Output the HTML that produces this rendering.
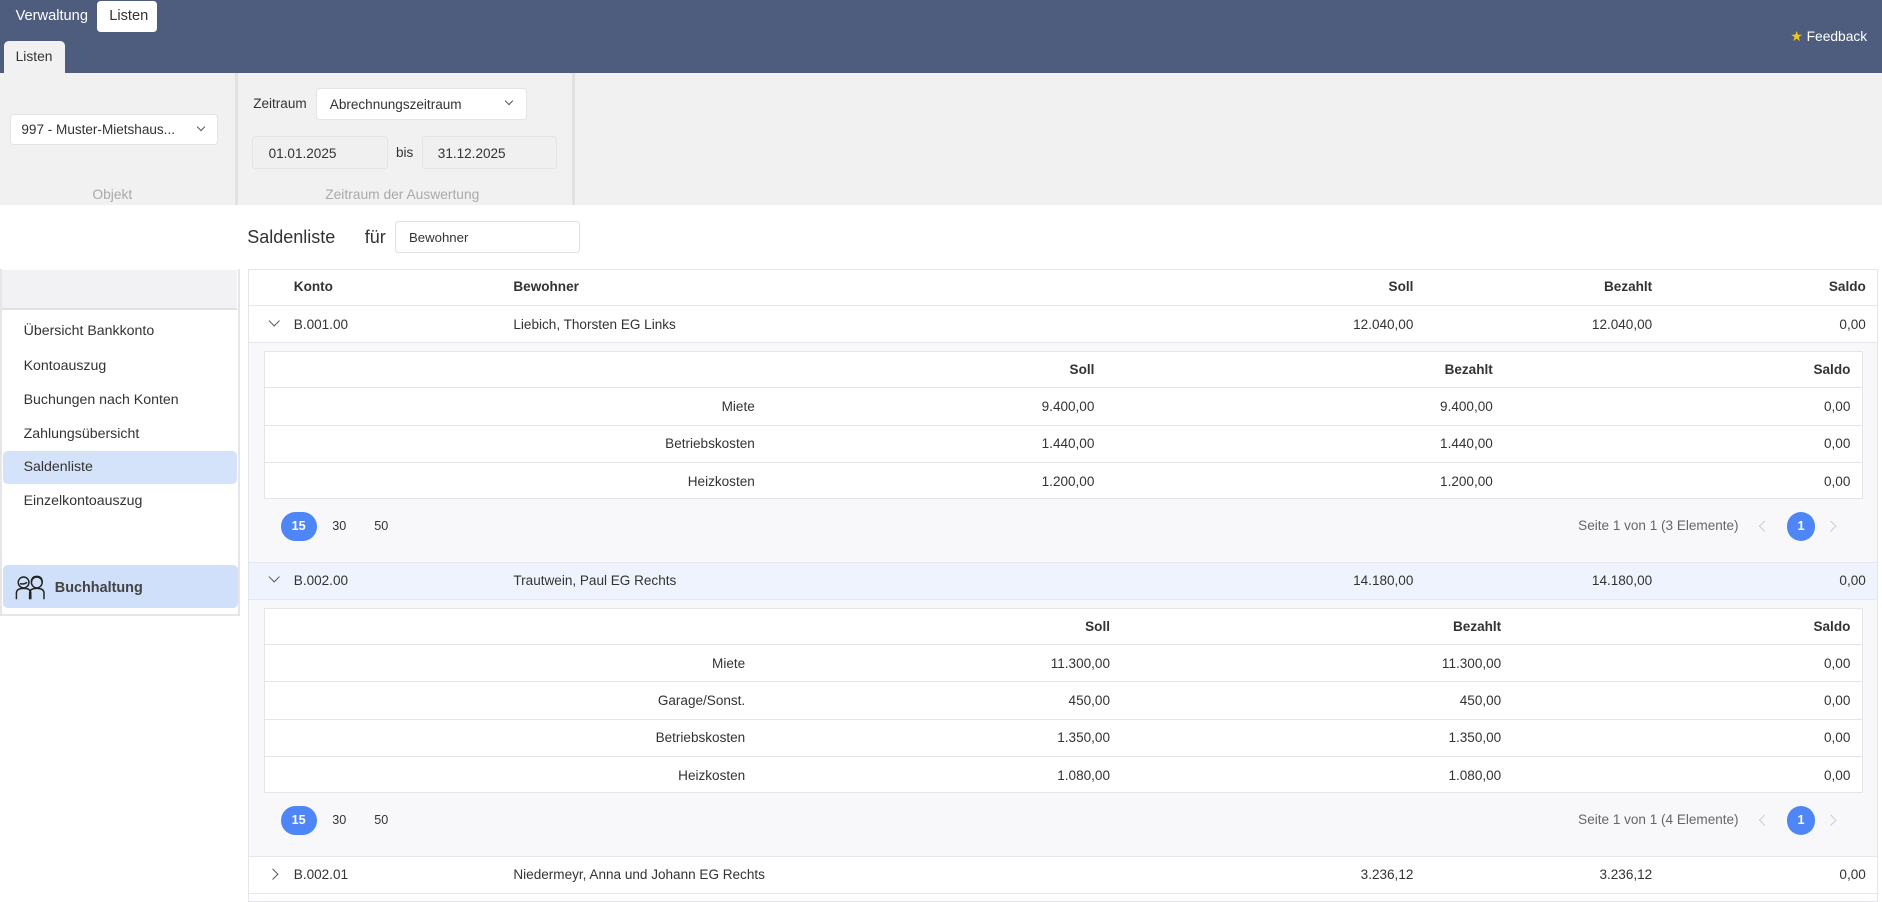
<!DOCTYPE html>
<html><head><meta charset="utf-8">
<style>
*{box-sizing:border-box;margin:0;padding:0}
html,body{width:1882px;height:902px;overflow:hidden;background:#fff}
#r{zoom:1.2;position:relative;width:1568px;height:752px;font-family:"Liberation Sans",sans-serif;font-size:11.3px;color:#333}
.a{position:absolute}
.top{left:0;top:0;width:1568px;height:61px;background:#4e5d7e}
.w{color:#fff}
.sel{background:#fff;border:1px solid #e3e3e3;border-radius:3px}
.inp{background:#f0f0f0;border:1px solid #e4e4e4;border-radius:3px}
.lbl{color:#aaa;font-size:11.5px}
.nav{left:0;top:224px;width:200px;height:289px;border:2px solid #e6e6ea;border-top:none;background:#fff}
.tb{left:207px;top:224px;width:1358px;height:528px;border:1px solid #e4e4ea;background:#fff}
.row{position:absolute;left:0;width:1356px;border-bottom:1px solid #e6e6ee}
.b{font-weight:bold}
.r{text-align:right}
.chev{position:absolute;width:7px;height:7px;border-right:1px solid #555;border-bottom:1px solid #555}
.pg{position:absolute;width:30px;height:24px;border-radius:12px;background:#4e86f7;color:#fff;font-weight:bold;font-size:10.5px;text-align:center;line-height:24px}
.inner{position:absolute;border:1px solid #e4e4ea;background:#fff}
.ir{position:absolute;left:0;right:0;height:31px;border-bottom:1px solid #e4e4ea}
</style></head><body><div id="r">
<div class="a top"></div>
<div class="a w" style="left:13px;top:7px;font-size:12.2px">Verwaltung</div>
<div class="a" style="left:81px;top:1px;width:50px;height:26px;background:#fff;border-radius:3px;font-size:12.2px;padding:6px 0 0 10px">Listen</div>
<div class="a" style="left:3px;top:34px;width:51px;height:27px;background:#f1f1f1;border-radius:4px 4px 0 0;font-size:11.5px;padding:7px 0 0 10px">Listen</div>
<div class="a w" style="left:1492px;top:24px;font-size:11.5px"><span style="color:#f5c518">★</span> Feedback</div>

<div class="a" style="left:0;top:61px;width:1568px;height:110px;background:#f1f1f1"></div>
<div class="a" style="left:196px;top:61px;width:2px;height:110px;background:#e2e2e2"></div>
<div class="a" style="left:477px;top:61px;width:2px;height:110px;background:#e2e2e2"></div>
<div class="a sel" style="left:8px;top:95px;width:174px;height:26px;padding:6px 0 0 9px">997 - Muster-Mietshaus...</div>
<div class="chev" style="left:165px;top:103px;transform:rotate(45deg);width:5px;height:5px"></div>
<div class="a lbl" style="left:77px;top:156px">Objekt</div>
<div class="a" style="left:211px;top:80px">Zeitraum</div>
<div class="a sel" style="left:263px;top:73px;width:176px;height:27px;padding:7px 0 0 11px">Abrechnungszeitraum</div>
<div class="chev" style="left:422px;top:82px;transform:rotate(45deg);width:5px;height:5px"></div>
<div class="a inp" style="left:210px;top:113px;width:113px;height:28px;padding:8px 0 0 13px">01.01.2025</div>
<div class="a" style="left:330px;top:121px">bis</div>
<div class="a inp" style="left:352px;top:113px;width:112px;height:28px;padding:8px 0 0 12px">31.12.2025</div>
<div class="a lbl" style="left:271px;top:156px">Zeitraum der Auswertung</div>

<div class="a" style="left:206px;top:189px;font-size:15px">Saldenliste</div>
<div class="a" style="left:304px;top:189px;font-size:15px">für</div>
<div class="a sel" style="left:329px;top:184px;width:154px;height:27px;padding:7px 0 0 11px;font-size:11px;border-color:#e0e0e0">Bewohner</div>

<div class="a nav">
 <div style="position:absolute;left:0;top:1px;width:196px;height:33px;background:#f2f2f4;border-bottom:2px solid #e2e2e6"></div>
 <div style="position:absolute;left:18px;top:38px;line-height:28.5px;font-size:11.8px">Übersicht Bankkonto<br>Kontoauszug<br>Buchungen nach Konten<br>Zahlungsübersicht<br><span style="display:block;margin-left:-17px;padding-left:17px;width:195px;background:#d4e2fa;border-radius:4px;height:27px;line-height:27px">Saldenliste</span>Einzelkontoauszug</div>
 <div style="position:absolute;left:1px;top:247px;width:196px;height:36px;background:#d0e0fa;border-radius:4px"></div>
 <svg style="position:absolute;left:10px;top:254px" width="28" height="22" viewBox="0 0 28 22" fill="none" stroke="#222" stroke-width="1.2"><circle cx="8" cy="7" r="4.5"/><path d="M2 21v-5q0-4 6-4t6 4v5M5 8q3 1 6-1"/><circle cx="19" cy="7" r="4.5"/><path d="M13 21v-5q0-4 6-4t6 4v5M14.5 7q0-5 4.5-5t4.5 5"/></svg>
 <div class="b" style="position:absolute;left:44px;top:259px;font-size:12px;color:#444">Buchhaltung</div>
</div>

<div class="a tb">
 <div class="row b" style="top:0;height:30px">
  <span class="a" style="left:37px;top:8px">Konto</span><span class="a" style="left:220px;top:8px">Bewohner</span>
  <span class="a r" style="right:386px;top:8px">Soll</span><span class="a r" style="right:187px;top:8px">Bezahlt</span><span class="a r" style="right:9px;top:8px">Saldo</span>
 </div>
 <div class="row" style="top:30px;height:31px">
  <div class="chev" style="left:17px;top:9px;transform:rotate(45deg)"></div>
  <span class="a" style="left:37px;top:9px">B.001.00</span><span class="a" style="left:220px;top:9px">Liebich, Thorsten EG Links</span>
  <span class="a" style="right:386px;top:9px">12.040,00</span><span class="a" style="right:187px;top:9px">12.040,00</span><span class="a" style="right:9px;top:9px">0,00</span>
 </div>
 <div class="row" style="top:61px;height:183px;background:#f8f8fa">
  <div class="inner" style="left:12px;top:7px;width:1333px;height:123px">
   <div class="ir b" style="top:0;height:30px"><span class="a" style="right:640px;top:8px">Soll</span><span class="a" style="right:308px;top:8px">Bezahlt</span><span class="a" style="right:10px;top:8px">Saldo</span></div>
   <div class="ir" style="top:30px"><span class="a" style="right:923px;top:9px">Miete</span><span class="a" style="right:640px;top:9px">9.400,00</span><span class="a" style="right:308px;top:9px">9.400,00</span><span class="a" style="right:10px;top:9px">0,00</span></div>
   <div class="ir" style="top:61px"><span class="a" style="right:923px;top:9px">Betriebskosten</span><span class="a" style="right:640px;top:9px">1.440,00</span><span class="a" style="right:308px;top:9px">1.440,00</span><span class="a" style="right:10px;top:9px">0,00</span></div>
   <div class="ir" style="top:92px;border:none"><span class="a" style="right:923px;top:9px">Heizkosten</span><span class="a" style="right:640px;top:9px">1.200,00</span><span class="a" style="right:308px;top:9px">1.200,00</span><span class="a" style="right:10px;top:9px">0,00</span></div>
  </div>
  <div class="pg" style="left:26px;top:141px">15</div>
  <span class="a" style="left:69px;top:147px;font-size:10.5px">30</span><span class="a" style="left:104px;top:147px;font-size:10.5px">50</span>
  <span class="a" style="right:115px;top:146px;color:#666">Seite 1 von 1 (3 Elemente)</span>
  <div class="chev" style="left:1259px;top:149px;transform:rotate(135deg);border-color:#ccc"></div>
  <div class="pg" style="left:1281px;top:141px;width:24px">1</div>
  <div class="chev" style="left:1315px;top:149px;transform:rotate(-45deg);border-color:#ccc"></div>
 </div>
 <div class="row" style="top:244px;height:31px;background:#eef3fd">
  <div class="chev" style="left:17px;top:9px;transform:rotate(45deg)"></div>
  <span class="a" style="left:37px;top:9px">B.002.00</span><span class="a" style="left:220px;top:9px">Trautwein, Paul EG Rechts</span>
  <span class="a" style="right:386px;top:9px">14.180,00</span><span class="a" style="right:187px;top:9px">14.180,00</span><span class="a" style="right:9px;top:9px">0,00</span>
 </div>
 <div class="row" style="top:275px;height:214px;background:#f8f8fa">
  <div class="inner" style="left:12px;top:7px;width:1333px;height:154px">
   <div class="ir b" style="top:0;height:30px"><span class="a" style="right:627px;top:8px">Soll</span><span class="a" style="right:301px;top:8px">Bezahlt</span><span class="a" style="right:10px;top:8px">Saldo</span></div>
   <div class="ir" style="top:30px"><span class="a" style="right:931px;top:9px">Miete</span><span class="a" style="right:627px;top:9px">11.300,00</span><span class="a" style="right:301px;top:9px">11.300,00</span><span class="a" style="right:10px;top:9px">0,00</span></div>
   <div class="ir" style="top:61px"><span class="a" style="right:931px;top:9px">Garage/Sonst.</span><span class="a" style="right:627px;top:9px">450,00</span><span class="a" style="right:301px;top:9px">450,00</span><span class="a" style="right:10px;top:9px">0,00</span></div>
   <div class="ir" style="top:92px"><span class="a" style="right:931px;top:9px">Betriebskosten</span><span class="a" style="right:627px;top:9px">1.350,00</span><span class="a" style="right:301px;top:9px">1.350,00</span><span class="a" style="right:10px;top:9px">0,00</span></div>
   <div class="ir" style="top:123px;border:none"><span class="a" style="right:931px;top:9px">Heizkosten</span><span class="a" style="right:627px;top:9px">1.080,00</span><span class="a" style="right:301px;top:9px">1.080,00</span><span class="a" style="right:10px;top:9px">0,00</span></div>
  </div>
  <div class="pg" style="left:26px;top:172px">15</div>
  <span class="a" style="left:69px;top:178px;font-size:10.5px">30</span><span class="a" style="left:104px;top:178px;font-size:10.5px">50</span>
  <span class="a" style="right:115px;top:177px;color:#666">Seite 1 von 1 (4 Elemente)</span>
  <div class="chev" style="left:1259px;top:180px;transform:rotate(135deg);border-color:#ccc"></div>
  <div class="pg" style="left:1281px;top:172px;width:24px">1</div>
  <div class="chev" style="left:1315px;top:180px;transform:rotate(-45deg);border-color:#ccc"></div>
 </div>
 <div class="row" style="top:489px;height:31px">
  <div class="chev" style="left:16px;top:11px;transform:rotate(-45deg)"></div>
  <span class="a" style="left:37px;top:9px">B.002.01</span><span class="a" style="left:220px;top:9px">Niedermeyr, Anna und Johann EG Rechts</span>
  <span class="a" style="right:386px;top:9px">3.236,12</span><span class="a" style="right:187px;top:9px">3.236,12</span><span class="a" style="right:9px;top:9px">0,00</span>
 </div>
</div>
</div></body></html>
